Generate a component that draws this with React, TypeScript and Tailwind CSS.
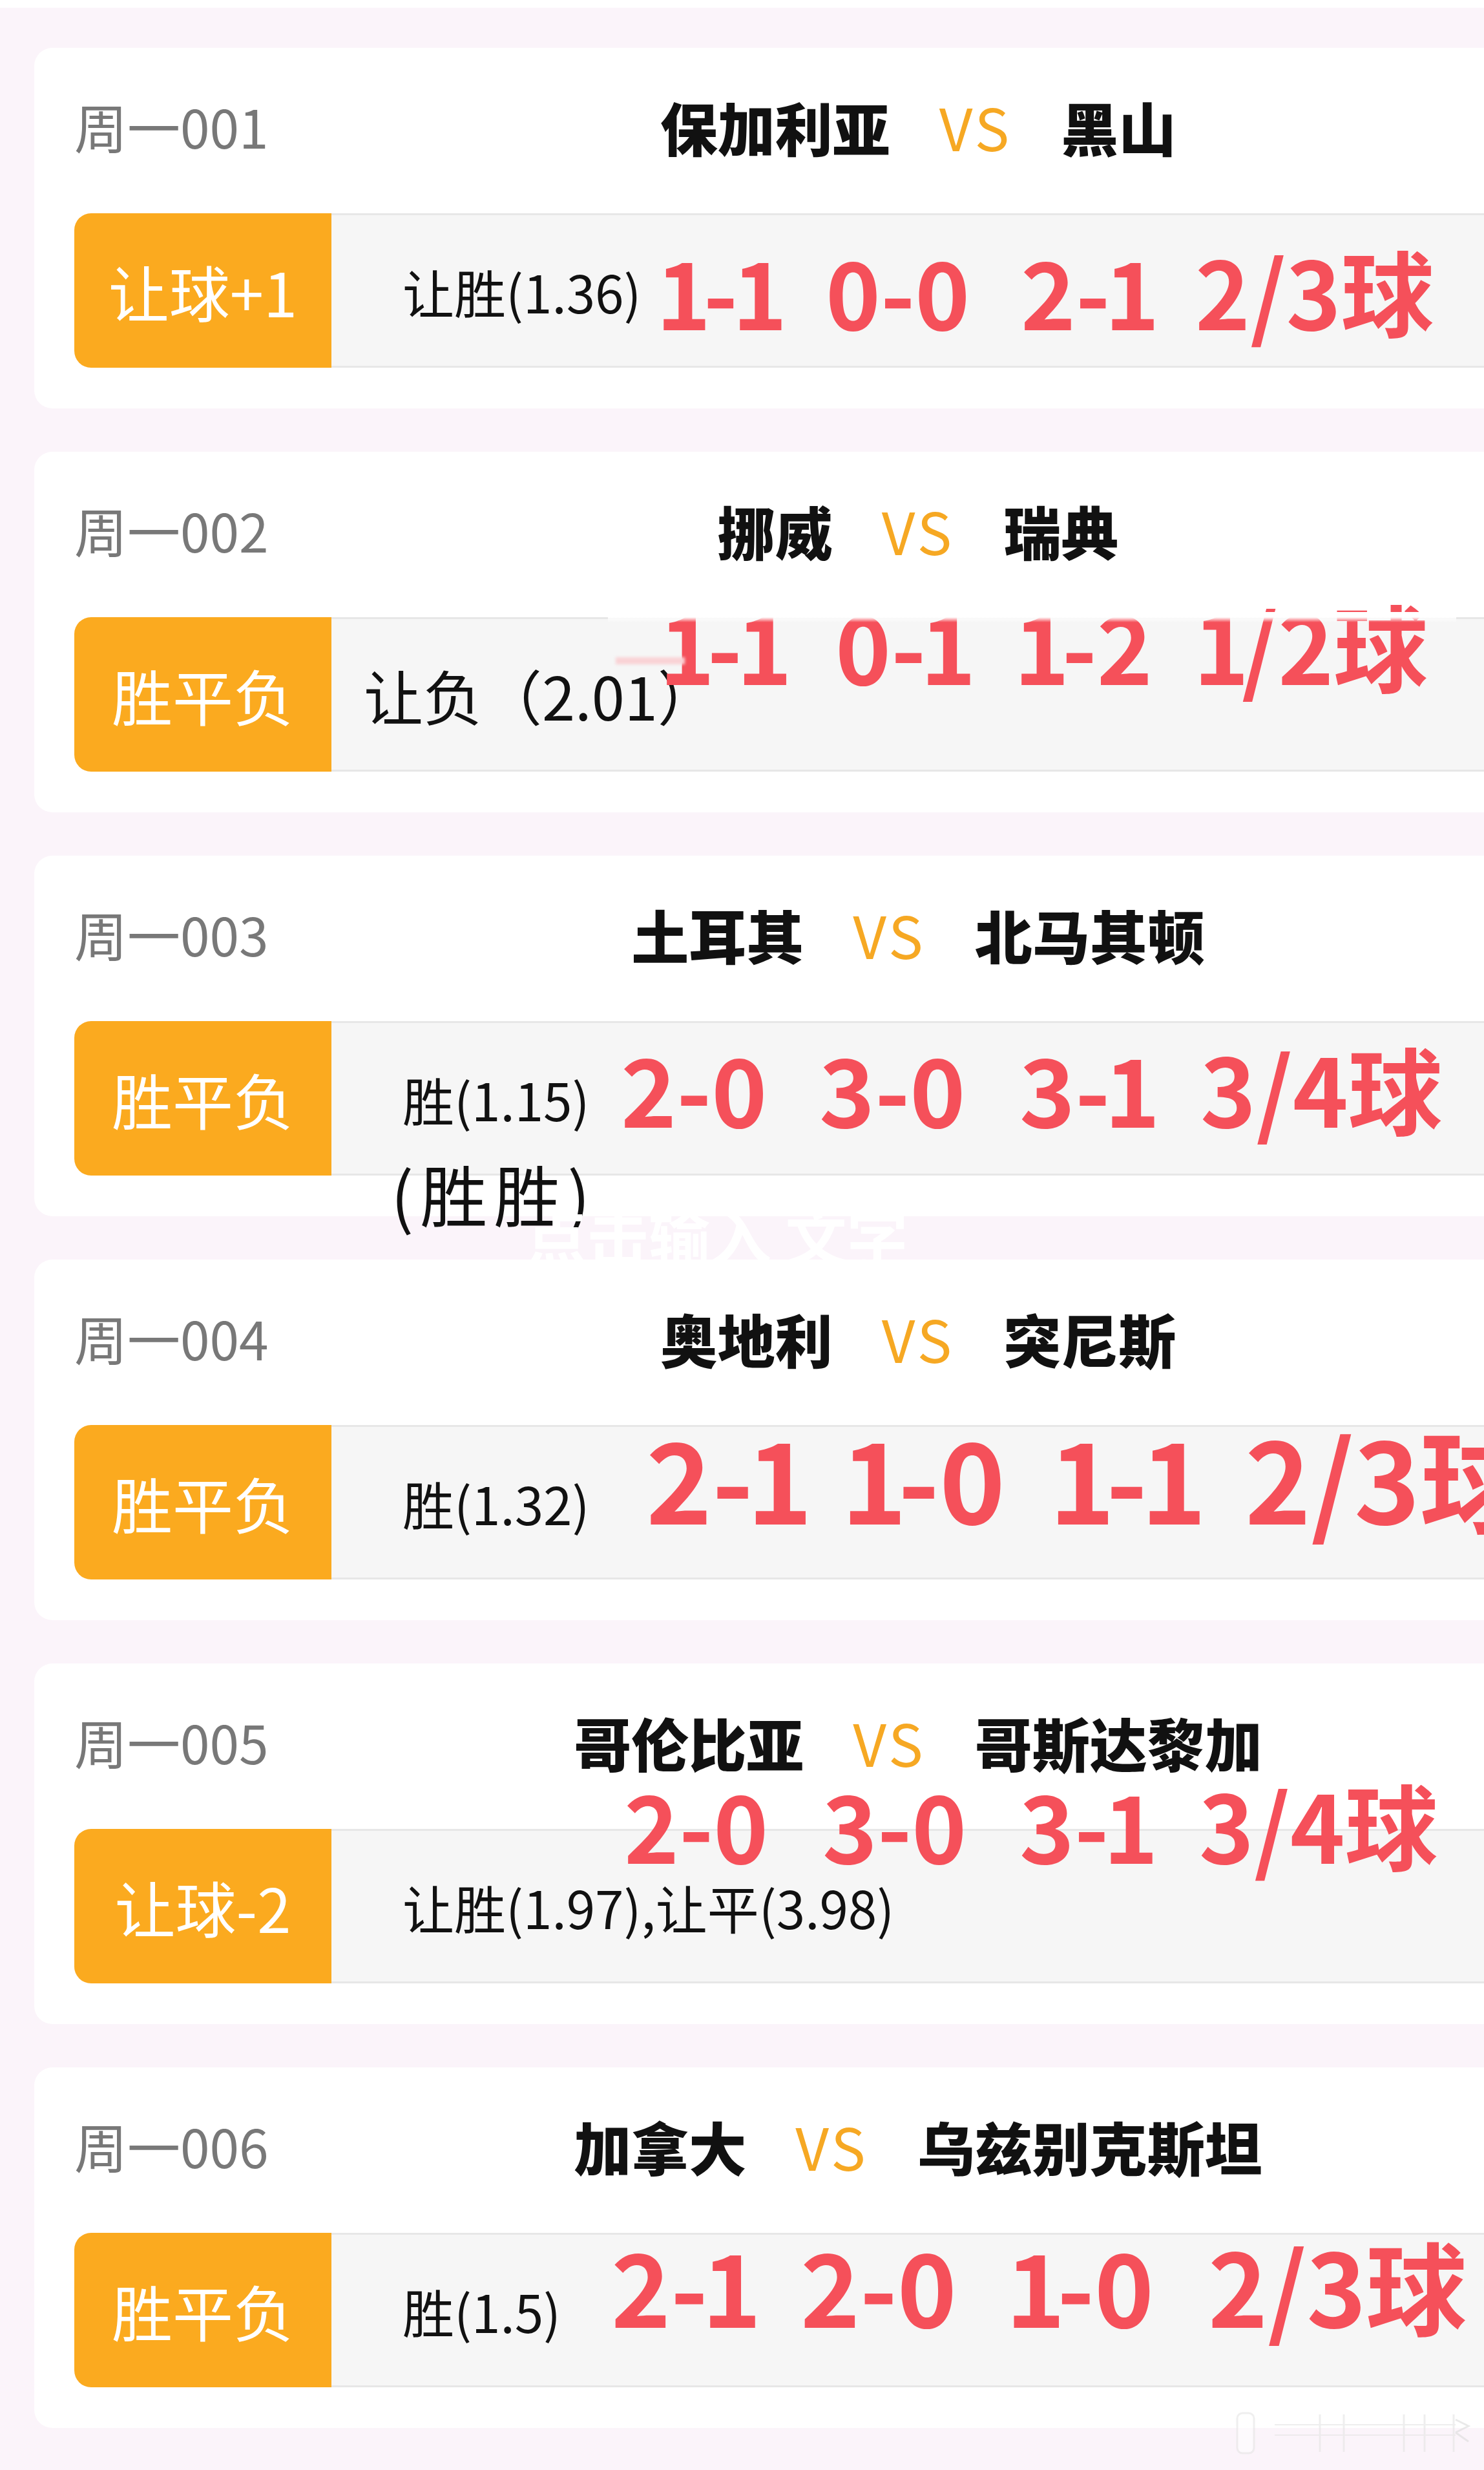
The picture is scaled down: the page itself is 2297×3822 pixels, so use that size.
import React from 'react';

type Match = {
  no: string;
  home: string;
  away: string;
  tag: string;
  odds: string;
  oddsCls: string;
  scores: string[];
  widths: string[];
  scoreCls: string;
};

const MATCHES: Match[] = [
  {
    no: '周一001',
    home: '保加利亚',
    away: '黑山',
    tag: '让球+1',
    odds: '让胜(1.36)',
    oddsCls: 'pl-[110px] text-[80px]',
    scores: ['1-1', '0-0', '2-1', '2/3球'],
    widths: ['w-[254px]', 'w-[302px]', 'w-[270px]'],
    scoreCls: 'left-[971px] top-[302px] text-[144px]',
  },
  {
    no: '周一002',
    home: '挪威',
    away: '瑞典',
    tag: '胜平负',
    odds: '让负（2.01）',
    oddsCls: 'pl-[50px] text-[92px]',
    scores: ['1-1', '0-1', '1-2', '1/2球'],
    widths: ['w-[264px]', 'w-[285px]', 'w-[278px]'],
    scoreCls: 'left-[976px] top-[225px] text-[146px]',
  },
  {
    no: '周一003',
    home: '土耳其',
    away: '北马其顿',
    tag: '胜平负',
    odds: '胜(1.15)',
    oddsCls: 'pl-[110px] text-[80px]',
    scores: ['2-0', '3-0', '3-1', '3/4球'],
    widths: ['w-[307px]', 'w-[310px]', 'w-[280px]'],
    scoreCls: 'left-[908px] top-[285px] text-[146px]',
  },
  {
    no: '周一004',
    home: '奥地利',
    away: '突尼斯',
    tag: '胜平负',
    odds: '胜(1.32)',
    oddsCls: 'pl-[110px] text-[80px]',
    scores: ['2-1', '1-0', '1-1', '2/3球'],
    widths: ['w-[312px]', 'w-[322px]', 'w-[293px]'],
    scoreCls: 'left-[947px] top-[248px] text-[173px]',
  },
  {
    no: '周一005',
    home: '哥伦比亚',
    away: '哥斯达黎加',
    tag: '让球-2',
    odds: '让胜(1.97),让平(3.98)',
    oddsCls: 'pl-[110px] text-[80px]',
    scores: ['2-0', '3-0', '3-1', '3/4球'],
    widths: ['w-[307px]', 'w-[305px]', 'w-[278px]'],
    scoreCls: 'left-[913px] top-[175px] text-[144px]',
  },
  {
    no: '周一006',
    home: '加拿大',
    away: '乌兹别克斯坦',
    tag: '胜平负',
    odds: '胜(1.5)',
    oddsCls: 'pl-[110px] text-[80px]',
    scores: ['2-1', '2-0', '1-0', '2/3球'],
    widths: ['w-[293px]', 'w-[327px]', 'w-[304px]'],
    scoreCls: 'left-[893px] top-[257px] text-[156px]',
  },
];

// 比分里的 "1" 收窄一点，原图用的是比例数字
function Score({ text }: { text: string }) {
  const parts = text.split(/(1)/).filter(Boolean);
  return (
    <>
      {parts.map((p, k) =>
        p === '1' ? (
          <span key={k} className="-ml-[0.06em] -mr-[0.08em]">
            1
          </span>
        ) : (
          <span key={k}>{p}</span>
        )
      )}
    </>
  );
}

function Card({ m, i }: { m: Match; i: number }) {
  return (
    <div className="relative w-[2736px] h-[558px] ml-[53px] shrink-0 rounded-[28px] bg-white">
      <div className="grid grid-cols-[1fr_auto_1fr] items-center h-[256px] px-[62px] pb-[14px]">
        <div className="text-[82px] leading-none text-[#787878]">{m.no}</div>
        <div className="flex items-center gap-[76px] leading-none">
          <span className="text-[89px] font-black text-[#111]">{m.home}</span>
          <span className="text-[90px] tracking-[4px] text-[#f6a823]">VS</span>
          <span className="text-[89px] font-black text-[#111]">{m.away}</span>
        </div>
        <div />
      </div>

      <div className="flex h-[239px] mx-[62px]">
        <div className="w-[398px] shrink-0 flex items-center justify-center rounded-l-[26px] bg-[#fbaa1f] text-[94px] leading-none text-white">
          {m.tag}
        </div>
        <div
          className={`flex-1 flex items-center bg-[#f6f6f6] border-y-[3px] border-[#e7e7e7] leading-none text-[#111] ${m.oddsCls}`}
        >
          {m.odds}
        </div>
      </div>

      {/* 后期贴上去的比分 */}
      <div className={`absolute flex leading-none font-bold text-[#f5505a] ${m.scoreCls}`}>
        {m.scores.map((s, k) => (
          <span key={k} className={`whitespace-nowrap ${m.widths[k] ?? ''}`}>
            <Score text={s} />
          </span>
        ))}
      </div>

      {i === 1 && (
        <>
          <div className="absolute left-[888px] top-[248px] w-[1313px] h-[16px] bg-linear-to-b from-white via-white to-transparent" />
          <div className="absolute left-[900px] top-[318px] w-[107px] h-[11px] bg-[#f9d3d6] blur-[2px]" />
        </>
      )}

      {i === 2 && (
        <>
          <div className="absolute left-[552px] top-[470px] text-[104px] tracking-[10px] leading-none text-[#111] whitespace-nowrap">
            (胜胜)
          </div>
          <div className="absolute left-[761px] top-[539px] text-[95px] font-bold leading-none text-white whitespace-nowrap">
            点击输入 文字
          </div>
        </>
      )}

      {i === 5 && (
        <svg
          className="absolute left-[1860px] top-[531px] opacity-60"
          width="367"
          height="70"
          viewBox="0 0 367 70"
          fill="none"
        >
          <rect x="2" y="4" width="26" height="62" rx="8" fill="#fff" stroke="#e6e6e6" strokeWidth="3" />
          <g stroke="#e4e4e4" strokeWidth="3">
            <line x1="130" y1="6" x2="130" y2="64" />
            <line x1="167" y1="6" x2="167" y2="64" />
            <line x1="260" y1="6" x2="260" y2="64" />
            <line x1="292" y1="6" x2="292" y2="64" />
            <line x1="337" y1="6" x2="337" y2="64" />
            <line x1="60" y1="22" x2="340" y2="22" strokeWidth="2" />
            <line x1="60" y1="38" x2="340" y2="38" strokeWidth="2" />
          </g>
          <path d="M340 14 L360 24 L340 34 M340 34 L360 48" stroke="#dcdcdc" strokeWidth="3" />
        </svg>
      )}
    </div>
  );
}

export default function App() {
  return (
    <div className="w-[2297px] min-h-[3822px] overflow-hidden bg-[#fbf4fa] font-['Noto_Sans_CJK_SC',sans-serif]">
      <div className="h-[12px] bg-white" />
      <div className="flex flex-col gap-[67px] pt-[62px] pb-[65px]">
        {MATCHES.map((m, i) => (
          <Card key={m.no} m={m} i={i} />
        ))}
      </div>
    </div>
  );
}
